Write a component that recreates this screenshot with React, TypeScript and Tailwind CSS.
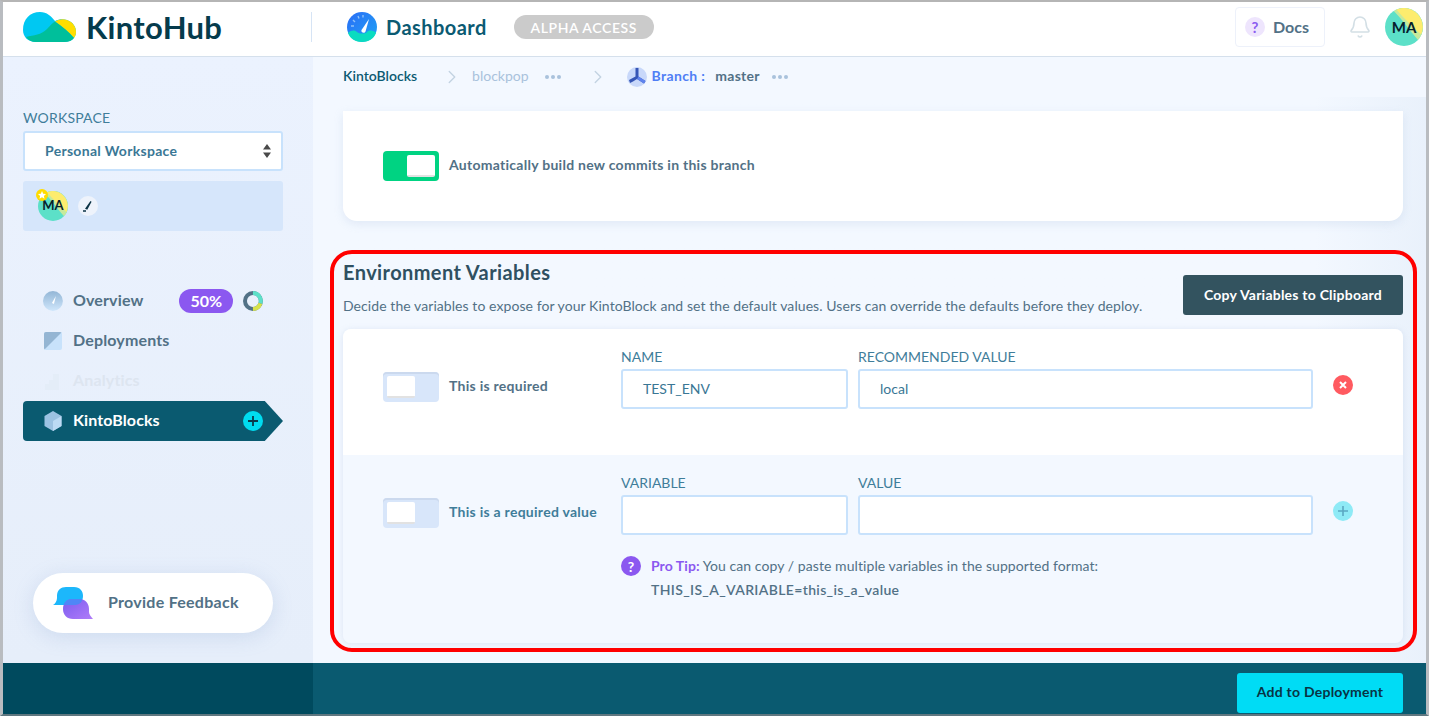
import React from 'react';
import { Bell, ChevronRight } from 'lucide-react';

function Toggle({ on }: { on?: boolean }) {
  return (
    <div className={`flex h-[30px] w-[56px] shrink-0 items-center rounded-[4px] px-[4px] ${on ? 'justify-end bg-[#00d382]' : 'justify-start bg-[#d8e6fa] shadow-[inset_0_2px_0_#cbd9ee]'}`}>
      <div className="h-[22px] w-[28px] rounded-[2px] border-b-2 border-[#e2e2e2] bg-white" />
    </div>
  );
}

function Avatar({ size, text }: { size: string; text: string }) {
  return (
    <div className={`relative flex items-center justify-center overflow-hidden rounded-full bg-[#5ce0c8] font-bold text-[#06202c] ${size} ${text}`}>
      <svg viewBox="0 0 40 40" className="absolute inset-0 h-full w-full">
        <path d="M9 3 C18 12 26 24 35 34 A20 20 0 0 0 9 3Z" fill="#c6ea9c" />
        <path d="M12 1.500 C20 11 29 20 38 28 A20 20 0 0 0 12 1.500Z" fill="#fdec6e" />
      </svg>
      <span className="relative">MA</span>
    </div>
  );
}

function Dots() {
  return <span className="flex gap-[2px]">{[0, 1, 2].map((i) => <span key={i} className="h-[4px] w-[4px] rounded-full bg-[#a9c2dc]" />)}</span>;
}

function Field({ label, value, wide }: { label: string; value?: string; wide?: boolean }) {
  return (
    <div className={wide ? 'w-[455px]' : 'w-[227px]'}>
      <div className="mb-[5px] h-[15px] text-[14px] leading-[15px] text-[#3f7d9a]">{label}</div>
      <div className="flex h-[40px] items-center rounded-[3px] border-2 border-[#c8e2fc] bg-white pb-[2px] pl-[20px] text-[14px] text-[#3a7795]">{value}</div>
    </div>
  );
}

function NavItem({ icon, label, faded, children }: { icon: React.ReactNode; label: string; faded?: boolean; children?: React.ReactNode }) {
  return (
    <div className={`flex h-[40px] items-center pl-[20px] pr-[20px] text-[16px] font-bold tracking-[0.15px] ${faded ? 'text-[#dde5f0]' : 'text-[#527186]'}`}>
      <div className="mr-[10px] h-[20px] w-[20px]">{icon}</div>
      <span className="mb-[2px]">{label}</span>
      {children}
    </div>
  );
}

export default function App() {
  return (
    <div className="relative h-[716px] w-[1429px] overflow-hidden border-x-[3px] border-t-2 border-b-2 border-x-[#b9bcc0] border-t-[#b5b5b5] border-b-[#5f7780] bg-[#f3f8ff] font-['Lato',sans-serif]">
      {/* header */}
      <header className="flex h-[55px] items-center border-b border-[#d5e0ec] bg-white pb-[4px]">
        <div className="flex w-[308px] shrink-0 items-center pl-[20px]">
          <svg viewBox="0 0 53 30" className="h-[30px] w-[53px]">
            <path d="M0 18C0 7 7 0 17 0c7 0 11 4 15 9 4-2 8-2 12-1 6 2 9 7 9 12 0 6-5 10-12 10H13C5 30 0 25 0 18Z" fill="#00c8f2" />
            <path d="M32 9.500c4-2 8-3 12-1.500 6 2 9 7 9 12 0 2-.5 4-2 6-5-6-12-11-19-16.500Z" fill="#ffde00" />
            <path d="M3 25c8-2 15-2 21-8 3-3 5-6 8-7.500 7 5 14 10 19 16.500-2 2.500-5 4-10 4H13c-4 0-8-2-10-5Z" fill="#00bf9b" />
          </svg>
          <span className="ml-[10px] text-[31px] font-bold leading-none tracking-[0.3px] text-[#053b4c]">KintoHub</span>
        </div>
        <div className="h-[30px] w-px bg-[#d6e4f5]" />
        <svg viewBox="0 0 30 30" className="ml-[35px] h-[30px] w-[30px]">
          <defs><linearGradient id="dash" x1="0" y1="0" x2="1" y2="1"><stop offset="0" stopColor="#2a6cf6" /><stop offset="1" stopColor="#1fa4f5" /></linearGradient></defs>
          <circle cx="15" cy="15" r="15" fill="url(#dash)" />
          <path d="M6 8l2 2M4 14h3M11 4l1 2.500M16 3v2.500" stroke="#8ec1f8" strokeWidth="1.400" />
          <path d="M1 21c4-3 6-3 9-1s8 2 10 0 6-2 9 1c-2 6-8 9-14 9S3 27 1 21Z" fill="#0adcc0" />
          <path d="M22 7l-3.500 12.500c-1 2.500-5 1-4-1.500z" fill="#fff" />
        </svg>
        <span className="ml-[9px] text-[20px] font-bold tracking-[0.45px] text-[#0b5a72]">Dashboard</span>
        <span className="ml-[27px] flex h-[24px] w-[140px] items-center justify-center rounded-full bg-[#cbcbcb] text-[14px] font-semibold tracking-[0.6px] text-white">ALPHA ACCESS</span>
        <div className="ml-auto flex items-center pr-[3px]">
          <div className="flex h-[40px] w-[90px] items-center rounded-[4px] border border-[#edf1fa] pl-[9px] text-[16px] font-bold text-[#527186]">
            <span className="mr-[8px] flex h-[20px] w-[20px] items-center justify-center rounded-full bg-[#eee5fd] text-[15px] font-bold text-[#8b5cf0]">?</span>
            Docs
          </div>
          <Bell className="ml-[23px] h-[24px] w-[24px] text-[#d3dfe5]" strokeWidth={1.6} />
          <Avatar size="ml-[13px] h-[38px] w-[38px]" text="text-[15px]" />
        </div>
      </header>

      <div className="flex h-[606px]">
        {/* sidebar */}
        <aside className="flex w-[310px] shrink-0 flex-col bg-gradient-to-b from-[#ebf2fe] to-[#e6eefa] pl-[20px] pr-[30px]">
          <div className="mt-[53px] h-[17px] text-[14px] leading-[15px] tracking-[0.2px] text-[#3f7d9a]">WORKSPACE</div>
          <div className="mt-[4px] flex h-[40px] w-[260px] items-center justify-between rounded-[3px] border-2 border-[#c8e2fc] bg-white pl-[20px] pr-[10px] text-[14px] font-bold tracking-[0.3px] text-[#3a7795]">
            <span className="mb-[2px]">Personal Workspace</span>
            <svg viewBox="0 0 8 14" className="h-[14px] w-[8px]"><path d="M4 0l4 5.500H0zM4 14L0 8.500h8z" fill="#4a4a4a" /></svg>
          </div>
          <div className="mt-[10px] flex h-[50px] w-[260px] items-center rounded-[3px] bg-[#d6e6fb] pl-[15px]">
            <div className="relative">
              <Avatar size="h-[30px] w-[30px]" text="text-[13px]" />
              <span className="absolute -left-[2px] -top-[2px] flex h-[12px] w-[12px] items-center justify-center rounded-full bg-[#ffdc00]">
                <svg viewBox="0 0 10 10" className="h-[8px] w-[8px]"><path d="M5 0l1.500 3.300 3.500.4-2.600 2.400.7 3.500L5 7.900 1.900 9.600l.7-3.500L0 3.700l3.500-.4z" fill="#fff" /></svg>
              </span>
            </div>
            <span className="ml-[10px] flex h-[20px] w-[20px] items-center justify-center rounded-full bg-[#eef3fb]">
              <svg viewBox="0 0 12 12" className="h-[12px] w-[12px]"><path d="M9 1.500L5 9 4 8.500zM1 11h3" stroke="#0c3345" strokeWidth="1.300" fill="none" /></svg>
            </span>
          </div>
          <nav className="mt-[50px] w-[260px]">
            <NavItem label="Overview" icon={
              <svg viewBox="0 0 20 20"><defs><linearGradient id="ov" x1="0" y1="0" x2="0" y2="1"><stop offset="0" stopColor="#93b6d6" /><stop offset="1" stopColor="#cfe6fb" /></linearGradient></defs><circle cx="10" cy="10" r="10" fill="url(#ov)" /><path d="M13 5l-2 8-2-1z" fill="#fff" /></svg>
            }>
              <span className="ml-[36px] flex h-[24px] w-[54px] items-center justify-center rounded-full bg-[#8b58f0] text-[16px] font-bold tracking-normal text-white">50%</span>
              <svg viewBox="0 0 20 20" className="ml-[10px] h-[20px] w-[20px]">
                <circle cx="10" cy="10" r="8" fill="none" stroke="#527186" strokeWidth="4" />
                <path d="M10 2a8 8 0 0 1 7.500 10.500" fill="none" stroke="#5ce0c8" strokeWidth="4" />
                <path d="M17.500 12.500A8 8 0 0 1 10 18" fill="none" stroke="#d7e24c" strokeWidth="4" />
              </svg>
            </NavItem>
            <NavItem label="Deployments" icon={
              <svg viewBox="0 0 20 20"><defs><clipPath id="dep"><rect x="1" y="1" width="18" height="18" rx="2" /></clipPath></defs><g clipPath="url(#dep)"><rect x="1" y="1" width="18" height="18" fill="#c8e2fb" /><path d="M1 1h18L1 19z" fill="#94b5d3" /></g></svg>
            } />
            <NavItem label="Analytics" faded icon={
              <svg viewBox="0 0 20 20"><path d="M2 19v-6h4V9h4V3h6v16z" fill="#e4edf8" /></svg>
            } />
            <div className="flex h-[40px] items-center rounded-l-[4px] bg-[#0a5a70] pl-[20px] text-[16px] font-bold tracking-[0.1px] text-white [clip-path:polygon(0_0,93%_0,100%_50%,93%_100%,0_100%)]">
              <svg viewBox="0 0 20 20" className="mr-[10px] h-[20px] w-[20px]"><path d="M10 0l8.500 5v10L10 20l-8.500-5V5z" fill="#9cc2e2" /><path d="M10 10l8.500-5v10L10 20z" fill="#bcdaf4" /></svg>
              <span className="mb-[2px]">KintoBlocks</span>
              <span className="ml-auto mr-[20px] flex h-[20px] w-[20px] items-center justify-center rounded-full bg-[#00dcf0] text-[#0a3a4a]">
                <svg viewBox="0 0 10 10" className="h-[10px] w-[10px]"><path d="M5 0v10M0 5h10" stroke="currentColor" strokeWidth="1.800" /></svg>
              </span>
            </div>
          </nav>
          <div className="ml-[10px] mt-[132px] flex h-[60px] w-[240px] items-center rounded-full bg-white pl-[20px] text-[16px] font-bold tracking-[0.27px] text-[#527186] shadow-[0_4px_20px_rgba(120,150,200,0.22)]">
            <svg viewBox="0 0 40 32" className="mr-[15px] h-[32px] w-[40px]">
              <defs>
                <linearGradient id="pb" x1="0" y1="0" x2="1" y2="1"><stop offset="0" stopColor="#7b5cf0" /><stop offset="1" stopColor="#b07cf8" /></linearGradient>
                <clipPath id="bb"><path d="M4 11V9C4 3 8 0 13 0h8c6 0 9 4 9 9s-3 9-8 9H0c2-1 4-4 4-7Z" /></clipPath>
              </defs>
              <path d="M4 11V9C4 3 8 0 13 0h8c6 0 9 4 9 9s-3 9-8 9H0c2-1 4-4 4-7Z" fill="#1cb7fb" />
              <path d="M10 22c0-6 4-10 9-10h7c6 0 10 4 10 10v3c0 2 2 5 4 7H20c-6 0-10-4-10-10Z" fill="url(#pb)" />
              <path d="M10 22c0-6 4-10 9-10h7c6 0 10 4 10 10v3c0 2 2 5 4 7H20c-6 0-10-4-10-10Z" fill="#4f86f7" clipPath="url(#bb)" />
            </svg>
            <span className="mb-[2px]">Provide Feedback</span>
          </div>
        </aside>

        {/* main */}
        <main className="flex min-w-0 flex-1 flex-col">
          <div className="flex h-[40px] shrink-0 items-center pb-[3px] pl-[30px] text-[14px]">
            <span className="font-semibold text-[#0b5a72]">KintoBlocks</span>
            <ChevronRight className="ml-[24px] mt-[3px] h-[22px] w-[22px] text-[#c3d3e2]" strokeWidth={1.5} />
            <span className="ml-[9px] text-[#a9c2dc]">blockpop</span>
            <span className="ml-[16px] mt-[3px]"><Dots /></span>
            <ChevronRight className="ml-[26px] mt-[3px] h-[22px] w-[22px] text-[#c3d3e2]" strokeWidth={1.5} />
            <svg viewBox="0 0 20 20" className="ml-[18px] mt-[3px] h-[20px] w-[20px]">
              <circle cx="10" cy="10" r="10" fill="#c8d8fa" />
              <path d="M8.500 1h3v8.500l7 4.500-1.500 2.500L10 12l-4 2.500-3 1.500-1-3 6.500-3.500z" fill="#3555b5" />
              <path d="M11.500 9.500l7 4.500-1.500 2.500L10 12z" fill="#5f83ee" />
            </svg>
            <span className="ml-[5px] font-bold tracking-[0.35px] text-[#4f7ef5]">Branch :</span>
            <span className="ml-[10px] font-bold tracking-[0.3px] text-[#527186]">master</span>
            <span className="ml-[12px] mt-[3px]"><Dots /></span>
          </div>
          <div className="flex-1 bg-gradient-to-r from-[#f3f8ff] from-90% to-[#e9f1fb] pl-[30px] pr-[23px] pt-[14px]">
            <div className="flex h-[110px] items-center rounded-b-[14px] bg-white pl-[40px] text-[14px] font-bold tracking-[0.27px] text-[#527186] shadow-[0_3px_10px_rgba(150,175,210,0.2)]">
              <Toggle on />
              <span className="mb-[3px] ml-[10px]">Automatically build new commits in this branch</span>
            </div>
            <div className="mt-[38px] flex h-[68px] items-start justify-between">
              <div>
                <h2 className="pt-[1px] text-[20px] font-bold leading-[24px] tracking-[0.4px] text-[#2f5061]">Environment Variables</h2>
                <p className="mt-[13px] text-[14px] leading-[18px] tracking-[0.07px] text-[#527186]">Decide the variables to expose for your KintoBlock and set the default values. Users can override the defaults before they deploy.</p>
              </div>
              <button className="mt-[16px] h-[40px] w-[220px] rounded-[3px] bg-[#33535f] pb-[2px] text-[14px] font-bold tracking-[0.23px] text-white">Copy Variables to Clipboard</button>
            </div>
            <div className="mt-[2px] overflow-hidden rounded-[8px] shadow-[0_1px_6px_rgba(150,175,210,0.25)]">
              <div className="flex h-[126px] bg-white pl-[40px] pt-[20px]">
                <div className="mt-[23px] flex h-[30px] w-[238px] items-center text-[14px] font-bold tracking-[0.27px] text-[#527186]">
                  <Toggle />
                  <span className="mb-[3px] ml-[10px]">This is required</span>
                </div>
                <Field label="NAME" value="TEST_ENV" />
                <div className="w-[10px]" />
                <Field label="RECOMMENDED VALUE" value="local" wide />
                <span className="ml-[20px] mt-[26px] flex h-[20px] w-[20px] items-center justify-center rounded-full bg-[#ff5a60]">
                  <svg viewBox="0 0 8 8" className="h-[8px] w-[8px]"><path d="M1 1l6 6M7 1L1 7" stroke="#fff" strokeWidth="2" /></svg>
                </span>
              </div>
              <div className="h-[188px] bg-[#f3f8ff] pl-[40px] pt-[20px]">
                <div className="flex">
                  <div className="mt-[23px] flex h-[30px] w-[238px] items-center text-[14px] font-bold tracking-[0.27px] text-[#3f7d9a]">
                    <Toggle />
                    <span className="mb-[3px] ml-[10px]">This is a required value</span>
                  </div>
                  <Field label="VARIABLE" />
                  <div className="w-[10px]" />
                  <Field label="VALUE" wide />
                  <span className="ml-[20px] mt-[26px] flex h-[20px] w-[20px] items-center justify-center rounded-full bg-[#8eeaf6]">
                    <svg viewBox="0 0 10 10" className="h-[10px] w-[10px]"><path d="M5 0v10M0 5h10" stroke="#5aa8c2" strokeWidth="1.600" /></svg>
                  </span>
                </div>
                <div className="ml-[238px] mt-[21px] flex">
                  <span className="flex h-[20px] w-[20px] items-center justify-center rounded-full bg-[#8b58f0] text-[14px] font-bold text-white">?</span>
                  <div className="ml-[10px] text-[14px] tracking-[0.07px] text-[#527186]">
                    <div className="leading-[20px]"><b className="font-bold text-[#8b58f0]">Pro Tip:</b> You can copy / paste multiple variables in the supported format:</div>
                    <div className="mt-[4px] font-semibold leading-[20px] tracking-[0.35px]">THIS_IS_A_VARIABLE=this_is_a_value</div>
                  </div>
                </div>
              </div>
            </div>
          </div>
        </main>
      </div>

      {/* footer */}
      <footer className="flex h-[51px]">
        <div className="w-[310px] bg-[#004a5e]" />
        <div className="flex flex-1 items-start justify-end bg-[#0a5a70] pr-[23px] pt-[10px]">
          <button className="h-[40px] w-[166px] rounded-[3px] bg-[#00dcf5] pb-[3px] text-[14px] font-bold tracking-[0.24px] text-[#083344]">Add to Deployment</button>
        </div>
      </footer>

      {/* red annotation */}
      <div className="pointer-events-none absolute left-[327px] top-[248px] h-[402px] w-[1087px] rounded-[22px] border-4 border-[#ff0000]" />
    </div>
  );
}
